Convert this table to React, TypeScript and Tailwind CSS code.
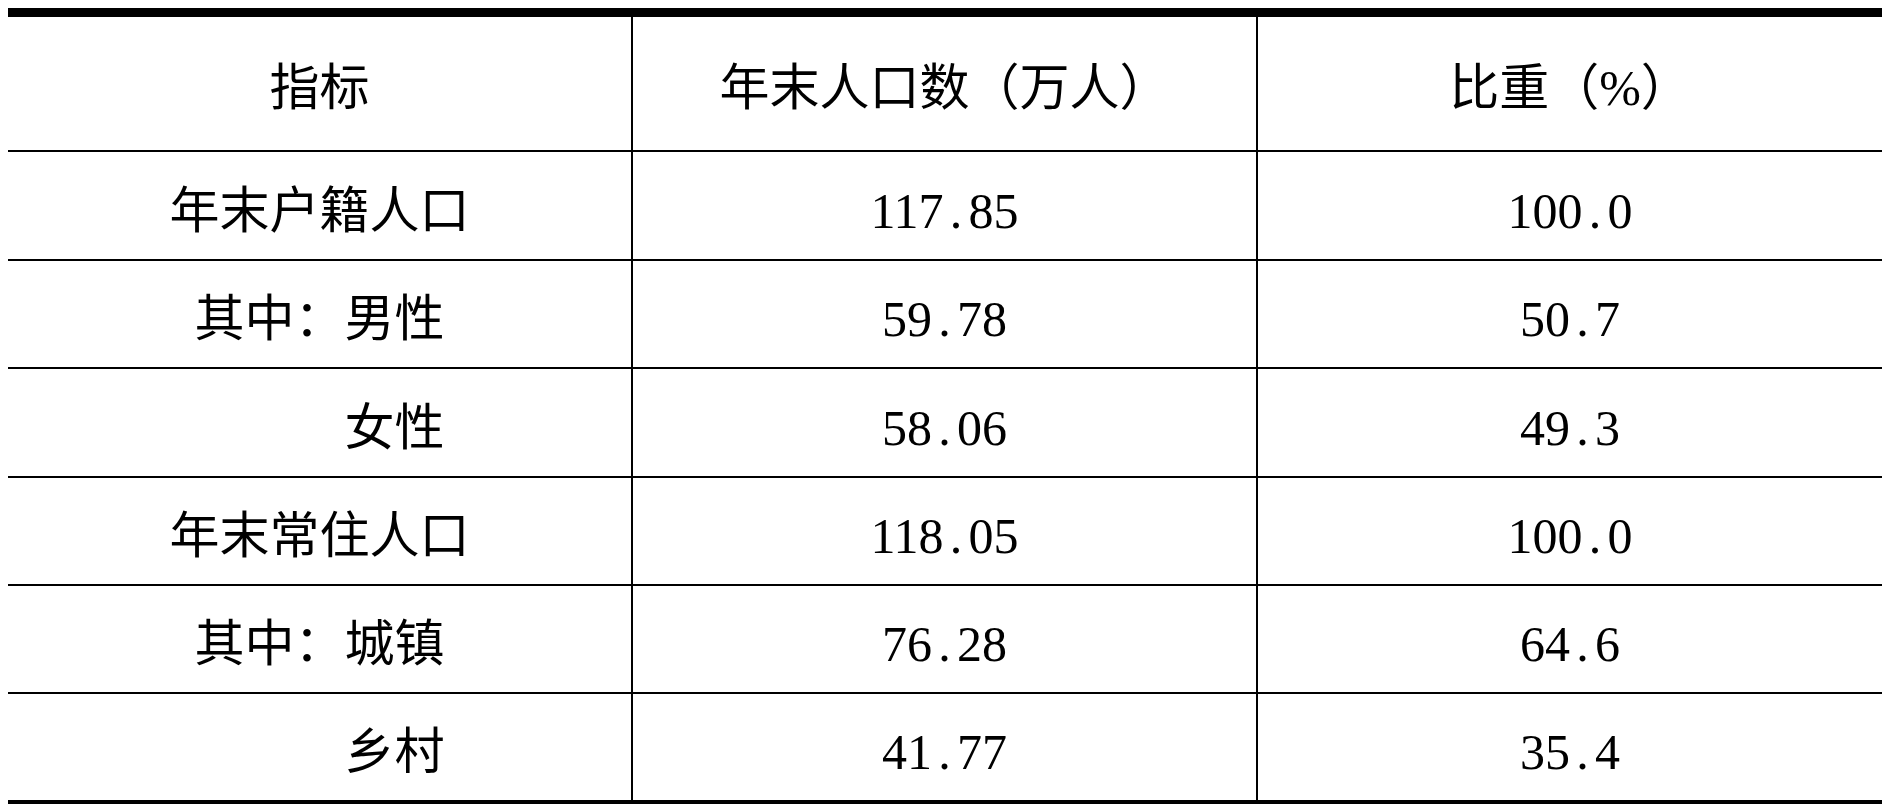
import React from "react";

const rows = [
  { name: "年末户籍人口", count: "117.85", share: "100.0", h: "h-[107px]" },
  { name: "其中：男性", count: "59.78", share: "50.7", h: "h-[106px]" },
  { name: "　　　女性", count: "58.06", share: "49.3", h: "h-[107px]" },
  { name: "年末常住人口", count: "118.05", share: "100.0", h: "h-[106px]" },
  { name: "其中：城镇", count: "76.28", share: "64.6", h: "h-[106px]" },
  { name: "　　　乡村", count: "41.77", share: "35.4", h: "h-[106px]" },
];

const cell = "flex items-center justify-center whitespace-pre";

// the source font gives the decimal point a full half-width cell
const Num = ({ v }: { v: string }) => {
  const [a, b] = v.split(".");
  return (
    <span>
      {a}
      <span className="inline-block w-[25px] text-center">.</span>
      {b}
    </span>
  );
};

export default function App() {
  return (
    <div
      className="min-h-screen bg-white pt-[8px] pl-[8px] text-black text-[50px] leading-none"
      style={{ fontFamily: '"Liberation Serif", "Noto Sans CJK SC", serif' }}
    >
      <div className="w-[1874px] border-t-[9px] border-black">
        {/* header */}
        <div className="grid h-[135px] grid-cols-[623px_625px_626px] border-b-2 border-black">
          <div className={`${cell} pt-[8px]`}>指标</div>
          <div className={`${cell} border-l-2 border-black pt-[8px]`}>年末人口数（万人）</div>
          <div className={`${cell} border-l-2 border-black pt-[8px]`}>比重（%）</div>
        </div>

        {rows.map((r, i) => (
          <div
            key={i}
            className={`grid ${r.h} grid-cols-[623px_625px_626px] ${
              i === rows.length - 1 ? "border-b-[9px]" : "border-b-2"
            } box-content border-black`}
          >
            <div className={`${cell} pt-[10px]`}>{r.name}</div>
            <div className={`${cell} border-l-2 border-black pt-[10px]`}>
              <Num v={r.count} />
            </div>
            <div className={`${cell} border-l-2 border-black pt-[10px]`}>
              <Num v={r.share} />
            </div>
          </div>
        ))}
      </div>
    </div>
  );
}
